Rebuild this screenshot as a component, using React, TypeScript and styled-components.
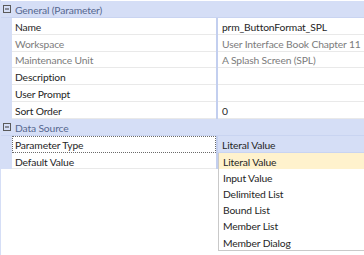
import { FunctionComponent } from "react";
import styled, { createGlobalStyle } from "styled-components";

const GlobalStyle = createGlobalStyle`
  html, body {
    margin: 0;
    padding: 0;
    background: #ffffff;
  }
  body {
    font-family: Lato, "Open Sans", sans-serif;
    font-size: 10.3px;
    letter-spacing: -0.15px;
  }
`;

const ROW = 16.85;
const BLUE = "#d5def6";
const DIVIDER = "#c3cfef";

const Page = styled.div`
  position: relative;
  width: 364px;
  height: 255px;
  overflow: hidden;
  background: #fff;
  border-left: 1px solid ${BLUE};
  box-sizing: border-box;
  padding-top: 1px;
`;

const Grid = styled.div`
  display: grid;
  grid-auto-rows: ${ROW}px;
`;

const CategoryRow = styled.div`
  display: grid;
  grid-template-columns: 11px 204px 2px 1fr;
  align-items: center;
  background: ${BLUE};
  color: #56678f;
  border-bottom: 1px solid #c9d4f1;
  box-sizing: border-box;
`;

const Toggle = styled.span`
  display: flex;
  justify-content: center;
  align-items: center;
  height: 100%;
`;

const CategoryText = styled.span`
  padding-left: 3px;
  padding-top: 2px;
  white-space: nowrap;
`;

const PropRow = styled.div`
  display: grid;
  grid-template-columns: 11px 204px 2px 1fr;
  align-items: stretch;
`;

const Gutter = styled.div`
  background: ${BLUE};
`;

const Divider = styled.div`
  background: ${DIVIDER};
`;

const Cell = styled.div<{ $muted?: boolean; $selected?: boolean; $focus?: boolean }>`
  display: flex;
  align-items: center;
  padding-top: 2px;
  padding-left: ${({ $focus }) => ($focus ? "2px" : "3px")};
  color: ${({ $muted }) => ($muted ? "#7c7c7c" : "#262626")};
  background: ${({ $selected }) => ($selected ? BLUE : "#fff")};
  border-bottom: 1px solid ${({ $selected }) => ($selected ? "#c9d4f1" : "#e9e9e9")};
  border: ${({ $focus }) => ($focus ? "1px dotted #6a6a6a" : undefined)};
  white-space: nowrap;
  overflow: hidden;
  box-sizing: border-box;
`;

const ValueCell = styled(Cell)`
  padding-left: 4px;
`;

const Dropdown = styled.ul`
  position: absolute;
  left: 217px;
  top: 153px;
  width: 160px;
  margin: 0;
  padding: 0;
  list-style: none;
  background: #fff;
  border: 1px solid #c9c9c9;
  border-top: none;
`;

const Option = styled.li<{ $active?: boolean }>`
  height: 16.2px;
  display: flex;
  align-items: center;
  padding-top: 1px;
  box-sizing: border-box;
  padding-left: 4px;
  color: #262626;
  background: ${({ $active }) => ($active ? "#fff2cd" : "#fff")};
`;

const MinusBox: FunctionComponent = () => (
  <svg width="8" height="8" viewBox="0 0 8 8">
    <rect x="0.5" y="0.5" width="7" height="7" fill="none" stroke="#5a5a5a" />
    <line x1="2" y1="4" x2="6" y2="4" stroke="#3a3a3a" />
  </svg>
);

type Prop = { label: string; value?: string; muted?: boolean };

const general: Prop[] = [
  { label: "Name", value: "prm_ButtonFormat_SPL" },
  { label: "Workspace", value: "User Interface Book Chapter 11", muted: true },
  { label: "Maintenance Unit", value: "A Splash Screen (SPL)", muted: true },
  { label: "Description" },
  { label: "User Prompt" },
  { label: "Sort Order", value: "0" },
];

const options = [
  "Literal Value",
  "Input Value",
  "Delimited List",
  "Bound List",
  "Member List",
  "Member Dialog",
];

const Category: FunctionComponent<{ title: string }> = ({ title }) => (
  <CategoryRow>
    <Toggle>
      <MinusBox />
    </Toggle>
    <CategoryText>{title}</CategoryText>
    <Divider />
    <span />
  </CategoryRow>
);

export default function App() {
  return (
    <>
      <GlobalStyle />
      <Page>
        <Grid>
          <Category title="General (Parameter)" />
          {general.map((p) => (
            <PropRow key={p.label}>
              <Gutter />
              <Cell $muted={p.muted}>{p.label}</Cell>
              <Divider />
              <ValueCell $muted={p.muted}>{p.value}</ValueCell>
            </PropRow>
          ))}
          <Category title="Data Source" />
          <PropRow>
            <Gutter />
            <Cell $focus>Parameter Type</Cell>
            <Divider />
            <ValueCell $selected>Literal Value</ValueCell>
          </PropRow>
          <PropRow>
            <Gutter />
            <Cell>Default Value</Cell>
            <Divider />
            <ValueCell />
          </PropRow>
        </Grid>
        <Dropdown>
          {options.map((o, i) => (
            <Option key={o} $active={i === 0}>
              {o}
            </Option>
          ))}
        </Dropdown>
      </Page>
    </>
  );
}
